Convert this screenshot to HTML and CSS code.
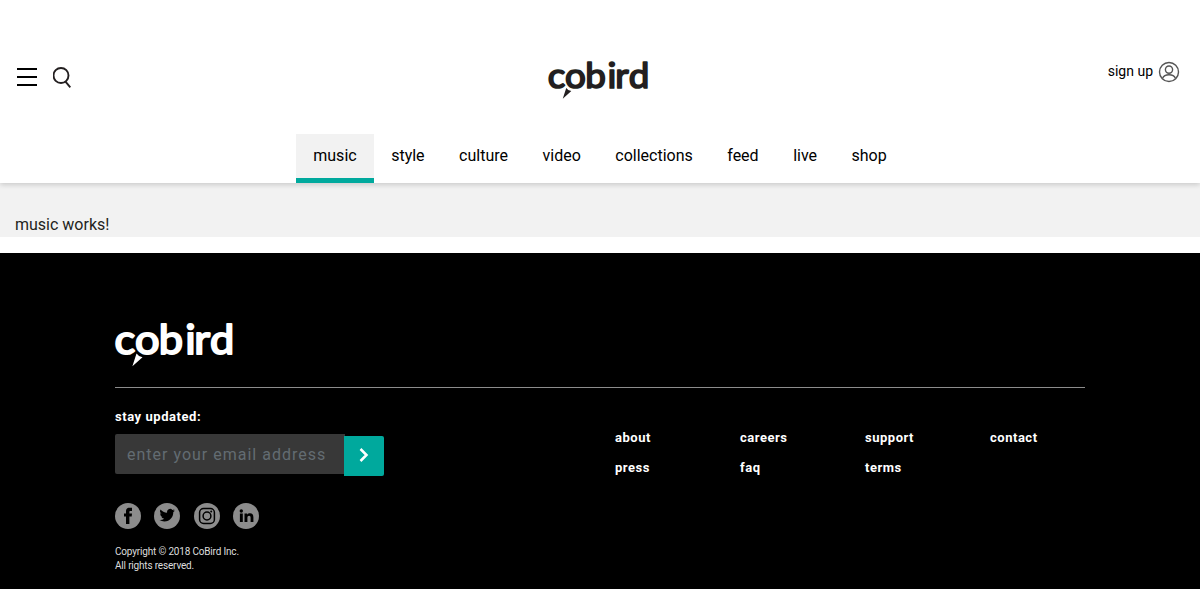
FILE: index.html
```html
<!DOCTYPE html>
<html lang="en">
<head>
<meta charset="utf-8">
<title>cobird</title>
<link rel="stylesheet" href="styles.css">
</head>
<body>
<header class="header">
  <div class="bar">
    <div class="tools">
      <svg class="menu" width="20" height="20" viewBox="0 0 20 20" stroke="#000" stroke-width="2"><path d="M0 2H20M0 10H20M0 18H20"/></svg>
      <svg class="search" width="20" height="22" viewBox="0 0 20 22" fill="none" stroke="#231f20" stroke-width="1.9"><circle cx="8" cy="8.500" r="7.500"/><path d="M12.300 14.300L17.300 20.300"/></svg>
    </div>
    <svg class="logo" width="101" height="37.400" viewBox="0 0 119 44">
      <text class="wordmark" transform="scale(1.07 1)" y="31" x="-.4 18.700 40.900 65.600 74 88.900">cobird</text>
      <path d="M21.500 30.500Q23.500 33.600 27.500 34.200L17.400 43.300Z"/>
    </svg>
    <a class="signup">sign up
      <svg width="22" height="22" viewBox="0 0 22 22" fill="none" stroke="#555" stroke-width="1.400"><circle cx="11" cy="11" r="9.500"/><circle cx="11" cy="8.600" r="3.600"/><path d="M4.500 17.500Q6 13.800 11 13.800T17.500 17.500"/></svg>
    </a>
  </div>
  <nav class="nav">
    <a class="active">music</a><a>style</a><a>culture</a><a>video</a><a>collections</a><a>feed</a><a>live</a><a>shop</a>
  </nav>
</header>
<main class="content">music works!</main>
<footer class="footer">
  <div class="inner">
    <svg class="foot-logo" width="119" height="44" viewBox="0 0 119 44">
      <text class="wordmark" transform="scale(1.07 1)" y="31" x="-.4 18.700 40.900 65.600 74 88.900">cobird</text>
      <path d="M21.500 30.500Q23.500 33.600 27.500 34.200L17.400 43.300Z"/>
    </svg>
    <div class="columns">
      <div class="updates">
        <div class="label">stay updated:</div>
        <form class="form">
          <input class="email" type="text" placeholder="enter your email address">
          <button class="send" type="button" aria-label="send"><svg width="10" height="14" viewBox="0 0 10 14" fill="none" stroke="#fff" stroke-width="2.500"><path d="M1.500 1L7.500 7L1.500 13"/></svg></button>
        </form>
        <div class="social">
          <svg width="26" height="26" viewBox="0 0 26 26"><circle cx="13" cy="13" r="13" fill="#8c8c8c"/><path d="M11 21V13.500H9V10.400H11V8.300C11 5.600 12.400 4.700 14.600 4.700H17V7.900H15.400C14.600 7.900 14.400 8.300 14.400 9V10.400H17L16.700 13.500H14.400V21Z"/></svg>
          <svg width="26" height="26" viewBox="0 0 26 26"><circle cx="13" cy="13" r="13" fill="#8c8c8c"/><path transform="translate(5.500 4.500) scale(.64)" d="M23.950 4.570a10 10 0 0 1-2.820.77 4.960 4.960 0 0 0 2.160-2.720c-.95.550-2 .95-3.130 1.180a4.920 4.920 0 0 0-8.380 4.480C7.690 8.100 4.070 6.130 1.640 3.160a4.920 4.920 0 0 0 1.520 6.570 4.900 4.900 0 0 1-2.230-.61v.06a4.920 4.920 0 0 0 3.950 4.830 5 5 0 0 1-2.210.08 4.940 4.940 0 0 0 4.600 3.420A9.870 9.870 0 0 1 0 19.540a14 14 0 0 0 7.550 2.210c9.050 0 14-7.500 14-13.980l-.02-.64a9.900 9.900 0 0 0 2.420-2.560z"/></svg>
          <svg width="26" height="26" viewBox="0 0 26 26"><circle cx="13" cy="13" r="13" fill="#8c8c8c"/><g fill="none" stroke="#000" stroke-width="1.500"><rect x="5.600" y="5.600" width="14.800" height="14.800" rx="4"/><circle cx="13" cy="13" r="3.900"/></g><circle cx="17.200" cy="8.600" r="1"/></svg>
          <svg width="26" height="26" viewBox="0 0 26 26"><circle cx="13" cy="13" r="13" fill="#8c8c8c"/><circle cx="8.300" cy="8" r="1.700"/><path d="M6.900 10.500H9.800V19H6.900ZM11.500 10.500H14.200V11.700C14.800 10.800 15.700 10.300 17 10.300C19.300 10.300 20.400 11.700 20.400 14.200V19H17.600V14.700C17.600 13.400 17.100 12.700 16.100 12.700C15 12.700 14.400 13.500 14.400 14.700V19H11.500Z"/></svg>
        </div>
        <div class="copyright">Copyright © 2018 CoBird Inc.<br>All rights reserved.</div>
      </div>
      <div class="links">
        <a>about</a><a>careers</a><a>support</a><a>contact</a>
        <a>press</a><a>faq</a><a>terms</a>
      </div>
    </div>
  </div>
</footer>
</body>
</html>
```
FILE: styles.css
```css
* { box-sizing: border-box; }
body { margin: 0; font-family: Roboto, sans-serif; color: #231f20; background: #fff; height: 589px; overflow: hidden; }
.wordmark { font: 400 40.5px Lato, sans-serif; stroke: currentColor; stroke-width: 2px; stroke-linejoin: round; }
.logo, .foot-logo { display: block; fill: currentColor; overflow: visible; }
.header { position: relative; height: 183px; background: #fff; box-shadow: 0 2px 5px rgba(0, 0, 0, .16); }
.bar { display: grid; grid-template-columns: 1fr 101px 1fr; height: 134px; padding: 62px 20px 0 17px; }
.tools { display: flex; gap: 16px; padding-top: 5px; }
.signup { display: flex; justify-content: flex-end; gap: 5px; font-size: 14px; line-height: 18px; color: #000; }
.signup svg { margin-top: -1px; }
.nav { display: flex; justify-content: center; height: 49px; }
.nav a { padding: 12px 17.25px 0; font-size: 16px; line-height: 20px; color: #000; border-bottom: 5px solid transparent; }
.nav .active { background: #f2f2f2; border-color: #00a99d; }
.content { height: 54px; padding: 32px 15px 0; background: #f2f2f2; font-size: 16px; line-height: 20px; }
.footer { margin-top: 16px; height: 336px; padding: 70px 115px 0; background: #000; color: #fff; }
.foot-logo { margin-bottom: 20px; }
.columns { display: flex; justify-content: space-between; border-top: 1px solid #8c8c8c; }
.updates { padding-top: 20px; }
.label { font-size: 13px; font-weight: 700; line-height: 18px; letter-spacing: .55px; }
.form { display: flex; margin: 8px 0 27px; height: 42px; }
.email { width: 230px; height: 40px; margin-right: -1px; padding: 0 12px; border: 0; border-radius: 2px 0 0 2px; background: #383838; font: 16px Roboto, sans-serif; letter-spacing: 1px; }
.email::placeholder { color: #636c72; }
.send { position: relative; display: flex; align-items: center; justify-content: center; width: 40px; height: 40px; margin-top: 2px; padding: 0 0 2px; border: 0; border-radius: 0 2px 2px 0; background: #00a99d; }
.social { display: flex; gap: 13.3px; }
.copyright { margin-top: 16px; font-size: 10px; line-height: 14px; letter-spacing: -.18px; color: #ddd; }
.links { display: grid; grid-template-columns: repeat(4, 125px); grid-auto-rows: 30px; width: 470px; padding-top: 41px; font-size: 13px; font-weight: 700; line-height: 18px; letter-spacing: .52px; }
```
